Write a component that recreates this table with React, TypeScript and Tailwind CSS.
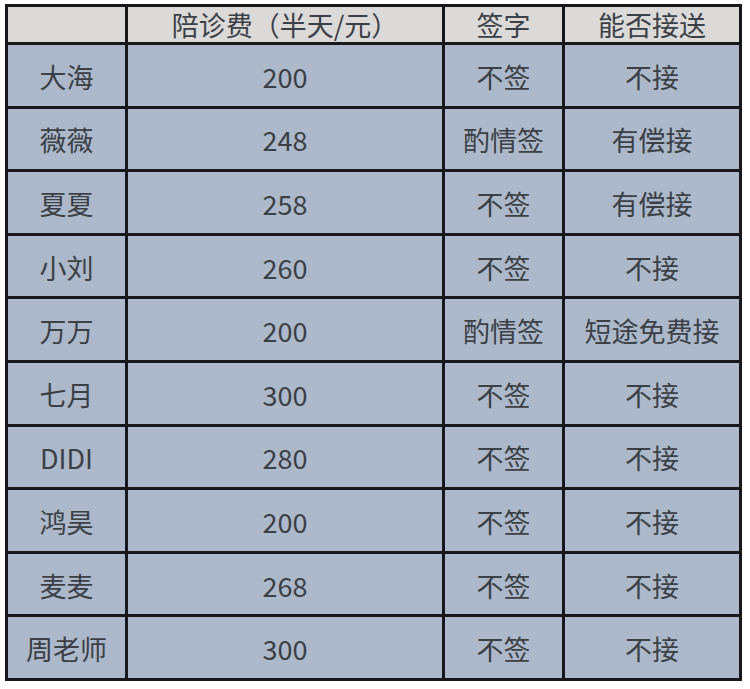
import React from "react";

const rows: [string, string, string, string][] = [
  ["大海", "200", "不签", "不接"],
  ["薇薇", "248", "酌情签", "有偿接"],
  ["夏夏", "258", "不签", "有偿接"],
  ["小刘", "260", "不签", "不接"],
  ["万万", "200", "酌情签", "短途免费接"],
  ["七月", "300", "不签", "不接"],
  ["DIDI", "280", "不签", "不接"],
  ["鸿昊", "200", "不签", "不接"],
  ["麦麦", "268", "不签", "不接"],
  ["周老师", "300", "不签", "不接"],
];

export default function App() {
  return (
    <div
      className="w-[750px] h-[689px] bg-white pl-[5px] pt-[4px]"
      style={{ fontFamily: '"Noto Sans CJK SC", "Noto Sans", sans-serif' }}
    >
      <div className="inline-grid grid-cols-[117px_314px_117px_174px] grid-rows-[35px_repeat(10,60.6px)] gap-[3px] p-[3px] bg-[#16181b] text-[#3b3f46] text-[27px] leading-none">
        <div className="bg-[#dcdad9]" />
        <div className="bg-[#dcdad9] flex items-center justify-center">陪诊费（半天/元）</div>
        <div className="bg-[#dcdad9] flex items-center justify-center">签字</div>
        <div className="bg-[#dcdad9] flex items-center justify-center">能否接送</div>
        {rows.map((r, i) => (
          <React.Fragment key={i}>
            {r.map((c, j) => (
              <div
                key={j}
                className="bg-[#adb9ca] flex items-center justify-center pt-[2px]"
              >
                {c}
              </div>
            ))}
          </React.Fragment>
        ))}
      </div>
    </div>
  );
}
